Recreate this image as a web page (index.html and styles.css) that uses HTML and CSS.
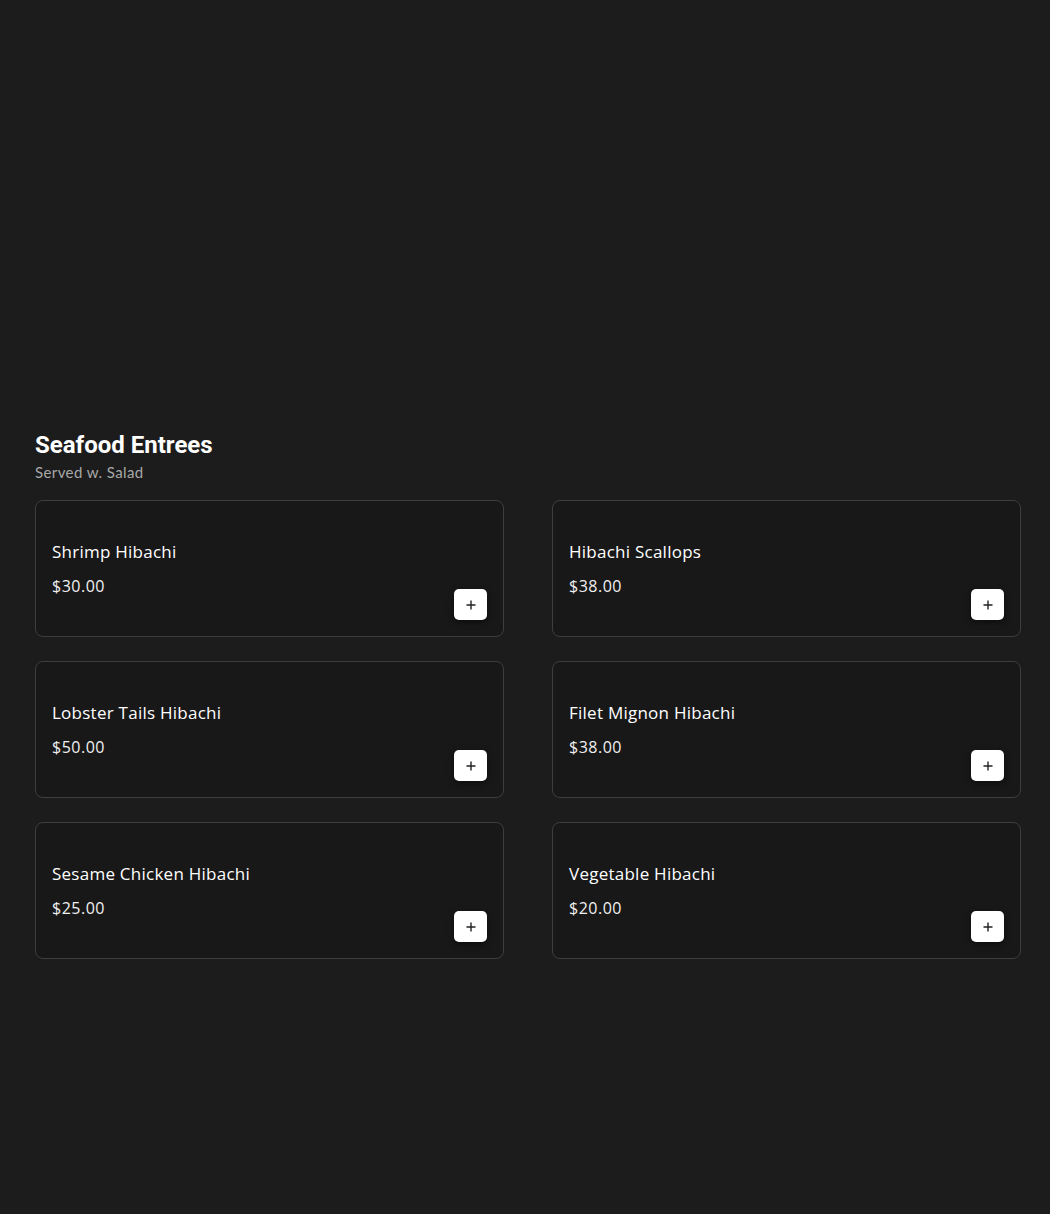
FILE: index.html
```html
<!DOCTYPE html>
<html>
<head>
<meta charset="utf-8">
<link rel="stylesheet" href="styles.css">
</head>
<body>
<main class="page">
  <section class="section">
    <h2 class="section-title">Seafood Entrees</h2>
    <p class="section-sub">Served w. Salad</p>
    <div class="grid">
      <div class="card">
        <div class="info"><div class="name">Shrimp Hibachi</div><div class="price">$30.00</div></div>
        <button class="add"><svg width="12" height="12" viewBox="0 0 12 12"><path d="M6 1.5v9M1.5 6h9" stroke="#222" stroke-width="1.4"/></svg></button>
      </div>
      <div class="card">
        <div class="info"><div class="name">Hibachi Scallops</div><div class="price">$38.00</div></div>
        <button class="add"><svg width="12" height="12" viewBox="0 0 12 12"><path d="M6 1.5v9M1.5 6h9" stroke="#222" stroke-width="1.4"/></svg></button>
      </div>
      <div class="card">
        <div class="info"><div class="name">Lobster Tails Hibachi</div><div class="price">$50.00</div></div>
        <button class="add"><svg width="12" height="12" viewBox="0 0 12 12"><path d="M6 1.5v9M1.5 6h9" stroke="#222" stroke-width="1.4"/></svg></button>
      </div>
      <div class="card">
        <div class="info"><div class="name">Filet Mignon Hibachi</div><div class="price">$38.00</div></div>
        <button class="add"><svg width="12" height="12" viewBox="0 0 12 12"><path d="M6 1.5v9M1.5 6h9" stroke="#222" stroke-width="1.4"/></svg></button>
      </div>
      <div class="card">
        <div class="info"><div class="name">Sesame Chicken Hibachi</div><div class="price">$25.00</div></div>
        <button class="add"><svg width="12" height="12" viewBox="0 0 12 12"><path d="M6 1.5v9M1.5 6h9" stroke="#222" stroke-width="1.4"/></svg></button>
      </div>
      <div class="card">
        <div class="info"><div class="name">Vegetable Hibachi</div><div class="price">$20.00</div></div>
        <button class="add"><svg width="12" height="12" viewBox="0 0 12 12"><path d="M6 1.5v9M1.5 6h9" stroke="#222" stroke-width="1.4"/></svg></button>
      </div>
    </div>
  </section>
</main>
</body>
</html>
```
FILE: styles.css
```css
html, body {
  margin: 0;
  padding: 0;
  background: #1c1c1c;
  height: 100%;
}
body {
  font-family: "Open Sans", "Liberation Sans", sans-serif;
  color: #fff;
}
.page {
  padding: 430px 30px 0 35px;
}
.section-title {
  margin: 0;
  font-family: Roboto, "Liberation Sans", sans-serif;
  font-weight: 700;
  font-size: 24px;
  line-height: 30px;
  color: #fff;
}
.section-sub {
  margin: 2px 0 18px;
  font-family: Lato, "Open Sans", sans-serif;
  font-size: 15px;
  line-height: 20px;
  letter-spacing: 0.4px;
  color: #a8a8a8;
}
.grid {
  display: grid;
  grid-template-columns: 469px 469px;
  column-gap: 48px;
  row-gap: 24px;
}
.card {
  box-sizing: border-box;
  height: 137px;
  background: #181818;
  border: 1px solid #3e3e3e;
  border-radius: 8px;
  padding: 16px;
  display: flex;
  justify-content: space-between;
  align-items: center;
}
.info {
  display: flex;
  flex-direction: column;
  gap: 10px;
}
.name {
  font-size: 17px;
  line-height: 24px;
  font-weight: 500;
  letter-spacing: 0.25px;
}
.price {
  font-size: 16px;
  line-height: 24px;
  letter-spacing: 0.5px;
  color: #f0f0f0;
}
.add {
  align-self: flex-end;
  width: 33px;
  height: 31px;
  border: none;
  border-radius: 5px;
  background: #fff;
  box-shadow: 0 2px 6px rgba(0,0,0,0.5);
  display: flex;
  align-items: center;
  justify-content: center;
  padding: 0;
}
```
